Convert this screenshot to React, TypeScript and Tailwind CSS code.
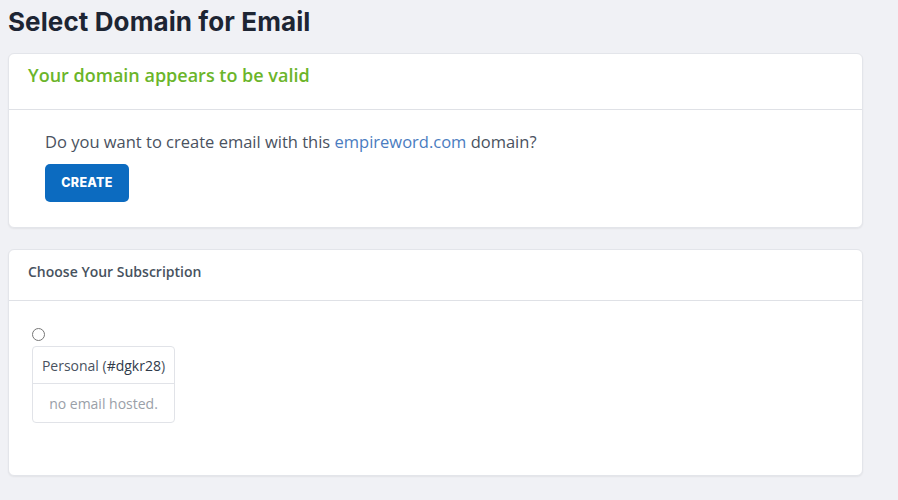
export default function App() {
  return (
    <div className="min-h-[500px] bg-[#f0f1f5] pl-2 pr-[35px] pt-[4px] pb-6 font-['Open_Sans',sans-serif] text-[#4a5260]">
      <h1 className="font-['Inter',sans-serif] text-[26px] font-bold leading-[36px] text-[#1d2533] tracking-[0.1px]">
        Select Domain for Email
      </h1>

      <div className="mt-[13px] rounded-md border border-[#e3e5ea] bg-white shadow-[0_1px_2px_rgba(0,0,0,0.06)]">
        <div className="h-[56px] border-b border-[#dfe1e6] px-[19px] pt-[8px]">
          <h2 className="text-[18px] font-semibold leading-[26px] text-[#6bb52a]">
            Your domain appears to be valid
          </h2>
        </div>
        <div className="px-[36px] pt-[21px] pb-[25px]">
          <p className="text-[16.5px] leading-[22px]">
            Do you want to create email with this{" "}
            <a className="text-[#4a7cc0]">empireword.com</a> domain?
          </p>
          <button className="mt-[11px] h-[38px] w-[84px] rounded-[5px] bg-[#0c6bc0] font-['Inter',sans-serif] text-[12.5px] font-extrabold tracking-[0.3px] text-white">
            CREATE
          </button>
        </div>
      </div>

      <div className="mt-[21px] rounded-md border border-[#e3e5ea] bg-white shadow-[0_1px_2px_rgba(0,0,0,0.06)]">
        <div className="h-[51px] border-b border-[#dfe1e6] px-[19px] pt-[12px]">
          <h3 className="text-[14px] font-semibold leading-[20px] text-[#47525e]">
            Choose Your Subscription
          </h3>
        </div>
        <div className="px-[23px] pt-[27px] pb-[52px]">
          <label className="flex flex-col items-start">
            <input type="radio" name="sub" className="h-[13px] w-[13px] accent-[#0c6bc0]" />
            <div className="mt-[5px] w-[143px] rounded-[4px] border border-[#e1e3e8] text-center">
              <div className="flex h-[37px] items-center justify-center border-b border-[#e1e3e8] text-[14px] text-[#4a5260]">
                Personal (<span className="text-[#2f3a4a]">#dgkr28</span>)
              </div>
              <div className="flex h-[38px] items-center justify-center text-[14px] text-[#9aa0a8]">
                no email hosted.
              </div>
            </div>
          </label>
        </div>
      </div>
    </div>
  );
}
